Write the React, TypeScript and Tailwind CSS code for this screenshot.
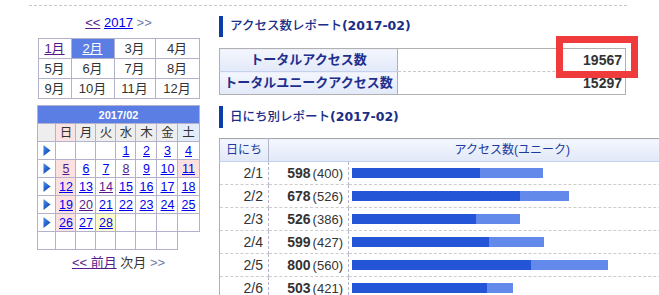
import React from "react";

const CAL_B = "border border-[#b3b1cc]";

function Arrow() {
  return (
    <svg width="8" height="11" viewBox="0 0 8 11" className="inline-block align-middle">
      <defs>
        <linearGradient id="arrg" x1="0" y1="0" x2="0.6" y2="1">
          <stop offset="0" stopColor="#4f93ee" />
          <stop offset="1" stopColor="#0c45b3" />
        </linearGradient>
      </defs>
      <path d="M0.5 0 L7.5 5.5 L0.5 11 Z" fill="url(#arrg)" />
    </svg>
  );
}

const weeks: (number | null)[][] = [
  [null, null, null, 1, 2, 3, 4],
  [5, 6, 7, 8, 9, 10, 11],
  [12, 13, 14, 15, 16, 17, 18],
  [19, 20, 21, 22, 23, 24, 25],
  [26, 27, 28, null, null, null, null],
];
const visited = new Set([5, 8, 14, 20]);

function dayBg(d: number | null, i: number) {
  if (d === 28) return "bg-[#ffffcc]";
  if (d !== null && (i === 0 || d === 11)) return "bg-[#fde0e0]";
  return "bg-white";
}

const daily: [string, number, number][] = [
  ["2/1", 598, 400],
  ["2/2", 678, 526],
  ["2/3", 526, 386],
  ["2/4", 599, 427],
  ["2/5", 800, 560],
  ["2/6", 503, 421],
];

const months = [
  ["1月", "2月", "3月", "4月"],
  ["5月", "6月", "7月", "8月"],
  ["9月", "10月", "11月", "12月"],
];

export default function App() {
  return (
    <div className="relative w-[659px] h-[295px] overflow-hidden bg-white font-['Liberation_Sans','Noto_Sans_CJK_JP',sans-serif] text-[#333]">
      <div className="ml-[29px] mt-[5px] w-[598px] border-t border-dashed border-[#c8c8c8]" />
      <div className="flex ml-[29px]">
        {/* left column */}
        <div className="w-[179px] shrink-0 flex flex-col items-center">
          <div className="mt-[7px] h-[20px] leading-[20px] text-[13px]">
            <span className="text-[#551a8b] underline">&lt;&lt;</span>{" "}
            <span className="text-[#0000ee] underline">2017</span>{" "}
            <span className="text-[#6c7ca8]">&gt;&gt;</span>
          </div>
          <table className="mt-[5px] border-collapse table-fixed w-[161px] text-[13px]">
            <colgroup>
              <col className="w-[33px]" />
              <col className="w-[43px]" />
              <col className="w-[41px]" />
              <col className="w-[44px]" />
            </colgroup>
            <tbody>
              {months.map((r, ri) => (
                <tr key={ri}>
                  {r.map((m) => (
                    <td
                      key={m}
                      className={`${CAL_B} h-[20px] p-0 text-center leading-[18px] ${
                        m === "2月" ? "bg-[#5b7ee5] text-white underline" : m === "1月" ? "text-[#551a8b] underline" : "text-[#333]"
                      }`}
                    >
                      {m}
                    </td>
                  ))}
                </tr>
              ))}
            </tbody>
          </table>
          <table className="mt-[6px] border-collapse table-fixed w-[161px] text-[12.5px]">
            <colgroup>
              <col className="w-[18px]" />
              <col className="w-[20px]" />
              <col className="w-[20px]" />
              <col className="w-[20px]" />
              <col className="w-[20px]" />
              <col className="w-[21px]" />
              <col className="w-[21px]" />
              <col className="w-[21px]" />
            </colgroup>
            <tbody>
              <tr>
                <td colSpan={8} className={`${CAL_B} h-[18px] p-0 bg-[#5b7ee5] text-white font-bold text-[11px] text-center leading-[16px]`}>
                  2017/02
                </td>
              </tr>
              <tr>
                <td className={`${CAL_B} h-[18px] p-0 bg-[#eeeeee]`} />
                {["日", "月", "火", "水", "木", "金", "土"].map((w, i) => (
                  <td
                    key={w}
                    className={`${CAL_B} h-[18px] p-0 text-center leading-[16px] ${
                      i === 0 ? "bg-[#fbe3e3]" : i === 6 ? "bg-[#e3edfa]" : "bg-[#eeeeee]"
                    }`}
                  >
                    {w}
                  </td>
                ))}
              </tr>
              {weeks.map((wk, wi) => (
                <tr key={wi}>
                  <td className={`${CAL_B} h-[18px] p-0 text-center leading-[10px]`}>
                    <Arrow />
                  </td>
                  {wk.map((d, i) => (
                    <td key={i} className={`${CAL_B} h-[18px] p-0 text-center leading-[16px] ${dayBg(d, i)}`}>
                      {d !== null && (
                        <span className={`underline ${visited.has(d) ? "text-[#551a8b]" : "text-[#0000ee]"}`}>{d}</span>
                      )}
                    </td>
                  ))}
                </tr>
              ))}
              <tr>
                {[0, 1, 2, 3, 4, 5, 6].map((i) => (
                  <td key={i} className={`${CAL_B} h-[18px] p-0`} />
                ))}
              </tr>
            </tbody>
          </table>
          <div className="mt-[3px] h-[20px] leading-[20px] text-[13px]">
            <span className="text-[#551a8b] underline">&lt;&lt; 前月</span>{" "}
            <span className="text-[#333]">次月</span>{" "}
            <span className="text-[#6c7ca8]">&gt;&gt;</span>
          </div>
        </div>

        {/* right column */}
        <div className="ml-[11px] w-[536px] shrink-0">
          <div className="mt-[10px] h-[21px] border-l-4 border-[#0c3ca8] pl-[7px] flex items-center text-[#1b2d86]">
            <span className="text-[12.5px] font-medium">アクセス数レポート</span>
            <span className="font-['DejaVu_Sans',sans-serif] font-bold text-[12.5px]">(2017-02)</span>
          </div>
          <table className="mt-[11px] border-collapse table-fixed w-[406px] border border-[#b0b0b0]">
            <colgroup>
              <col className="w-[178px]" />
              <col className="w-[228px]" />
            </colgroup>
            <tbody>
              <tr>
                <td className="h-[23px] p-0 leading-[18px] text-center font-bold text-[13px] text-[#1f2f8f] bg-linear-to-b from-[#f3f6fd] to-[#e2e9f8] border-r border-r-[#b0b0b0] border-b border-b-[#c5d2ee]">
                  トータルアクセス数
                </td>
                <td className="h-[23px] p-0 pr-[3px] leading-[18px] text-right font-bold text-[14px] text-[#333] border-b border-dashed border-b-[#c8c8c8]">
                  19567
                </td>
              </tr>
              <tr>
                <td className="h-[23px] p-0 leading-[18px] text-center font-bold text-[13px] text-[#1f2f8f] bg-linear-to-b from-[#f3f6fd] to-[#e2e9f8] border-r border-r-[#b0b0b0]">
                  トータルユニークアクセス数
                </td>
                <td className="h-[23px] p-0 pr-[3px] leading-[18px] text-right font-bold text-[14px] text-[#333]">15297</td>
              </tr>
            </tbody>
          </table>
          <div className="mt-[11px] h-[22px] border-l-4 border-[#0c3ca8] pl-[7px] flex items-center text-[#1b2d86]">
            <span className="text-[12.5px] font-medium">日にち別レポート</span>
            <span className="font-['DejaVu_Sans',sans-serif] font-bold text-[12.5px]">(2017-02)</span>
          </div>
          <table className="mt-[10px] border-collapse table-fixed w-[536px] border-l border-l-[#aeaccb] border-t border-t-[#a8a8a8]">
            <colgroup>
              <col className="w-[49px]" />
              <col className="w-[80px]" />
              <col className="w-[407px]" />
            </colgroup>
            <thead>
              <tr>
                <th className="h-[23px] p-0 leading-[18px] font-normal text-[12px] text-[#1a3a9e] text-center bg-linear-to-b from-[#f4f7fe] to-[#e1e8f7] border-r border-r-[#b5b3cc] border-b border-b-[#c3d0ee]">
                  日にち
                </th>
                <th
                  colSpan={2}
                  className="h-[23px] p-0 leading-[18px] font-normal text-[12px] text-[#1a3a9e] text-center bg-linear-to-b from-[#f4f7fe] to-[#e1e8f7] border-b border-b-[#c3d0ee]"
                >
                  アクセス数(ユニーク)
                </th>
              </tr>
            </thead>
            <tbody>
              {daily.map(([d, c, u]) => (
                <tr key={d}>
                  <td className="h-[23px] p-0 pr-[5px] leading-[18px] text-right text-[14px] text-[#333] border-r border-r-[#b5b3cc] border-b border-dashed border-b-[#cccccc]">
                    {d}
                  </td>
                  <td className="h-[23px] p-0 pr-[5px] leading-[18px] text-right text-[#333] border-r border-r-[#b5b3cc] border-b border-dashed border-b-[#cccccc] whitespace-nowrap">
                    <span className="font-bold text-[14px]">{c}</span>
                    <span className="text-[13px] ml-[2px]">({u})</span>
                  </td>
                  <td className="h-[23px] p-0 pl-[3px] leading-[10px] border-b border-dashed border-b-[#cccccc]">
                    <div className="h-[10px] bg-[#6389ea]" style={{ width: `${c * 0.32}px` }}>
                      <div className="h-full bg-[#2355d6]" style={{ width: `${u * 0.32}px` }} />
                    </div>
                  </td>
                </tr>
              ))}
            </tbody>
          </table>
        </div>
      </div>
      <div className="absolute left-[556px] top-[36px] w-[82px] h-[42px] border-[7px] border-[#ef3b3b]" />
    </div>
  );
}
